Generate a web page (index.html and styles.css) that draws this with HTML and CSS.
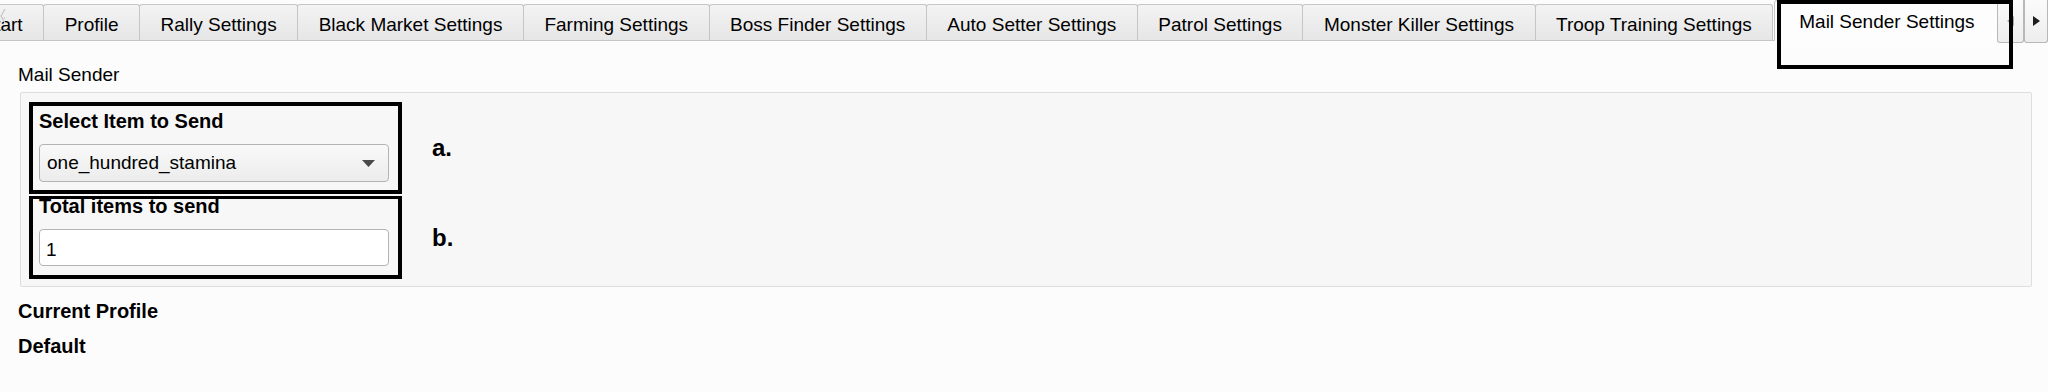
FILE: index.html
```html
<!DOCTYPE html>
<html lang="en">
<head>
    <meta charset="UTF-8">
    <meta name="viewport" content="width=device-width, initial-scale=1.0">
    <title>Mail Sender Settings</title>
    <link rel="stylesheet" href="styles.css">
</head>
<body>
    <div class="window">
        <!-- Tab bar -->
        <div class="tabbar">
            <div class="tabs">
                <div class="tab">Start</div>
                <div class="tab">Profile</div>
                <div class="tab">Rally Settings</div>
                <div class="tab">Black Market Settings</div>
                <div class="tab">Farming Settings</div>
                <div class="tab">Boss Finder Settings</div>
                <div class="tab">Auto Setter Settings</div>
                <div class="tab">Patrol Settings</div>
                <div class="tab">Monster Killer Settings</div>
                <div class="tab">Troop Training Settings</div>
                <div class="tab active">Mail Sender Settings</div>
            </div>
        </div>

        <!-- leftover of the hidden left scroll arrow -->
        <svg class="ghost-arrow" width="6" height="24" viewBox="0 0 6 24">
            <path d="M5 1 L1 8 L5 15" fill="none" stroke="#b8b8b8" stroke-width="1"/>
            <path d="M5 9 L3 12 L5 15" fill="none" stroke="#d0d0d0" stroke-width="1"/>
        </svg>

        <!-- Tab scroll buttons -->
        <div class="tab-scroll">
            <div class="scroll-btn left">
                <svg width="7" height="10" viewBox="0 0 7 10"><path d="M7 0 V10 L0 5 Z" fill="#a8a8a8"/></svg>
            </div>
            <div class="scroll-btn right">
                <svg width="7" height="10" viewBox="0 0 7 10"><path d="M0 0 V10 L7 5 Z" fill="#1e1e1e"/></svg>
            </div>
        </div>

        <!-- Annotation around the current tab -->
        <div class="annot-tab"></div>

        <div class="pane">
            <div class="pane-title">Mail Sender</div>

            <div class="group">
                <div class="field-row">
                    <div class="field">
                        <div class="field-label">Select Item to Send</div>
                        <div class="combo">
                            <span>one_hundred_stamina</span>
                            <svg width="13" height="7" viewBox="0 0 13 7"><path d="M0 0 H13 L6.5 7 Z" fill="#4a4a4a"/></svg>
                        </div>
                    </div>
                    <div class="field-mark">a.</div>
                </div>
                <div class="field-row">
                    <div class="field field-b">
                        <div class="field-label">Total items to send</div>
                        <input type="text" class="count-input" value="1">
                    </div>
                    <div class="field-mark">b.</div>
                </div>
            </div>

            <div class="profile">
                <div>Current Profile</div>
                <div>Default</div>
            </div>
        </div>
    </div>
</body>
</html>
```

FILE: styles.css
```css
body {
    margin: 0;
    background-color: #fcfcfc;
    font-family: "Liberation Sans", Arial, sans-serif;
    font-size: 19px;
    color: #000;
}
.window {
    position: relative;
    width: 2048px;
    height: 392px;
    overflow: hidden;
}
.tabbar {
    height: 41px;
    overflow: hidden;
    background: linear-gradient(to top, #c6c6c6 1px, transparent 1px);
}
.tabs {
    display: flex;
    align-items: flex-end;
    height: 41px;
    margin-left: -39px;
}
.tab {
    flex: none;
    box-sizing: border-box;
    height: 36px;
    margin-bottom: 1px;
    margin-right: -1px;
    padding: 9px 20.5px 0;
    line-height: 22px;
    border: 1px solid #c6c6c6;
    border-bottom: none;
    border-radius: 3px 3px 0 0;
    background: linear-gradient(#f3f3f3, #e6e6e6);
    white-space: nowrap;
}
.tab.active {
    position: relative;
    z-index: 1;
    height: 41px;
    margin-bottom: 0;
    margin-left: 2px;
    padding: 10px 24px 0;
    background: #fdfdfd;
}
.ghost-arrow {
    position: absolute;
    left: 0;
    top: 8px;
}
.tab-scroll {
    position: absolute;
    top: 0;
    right: 0;
    display: flex;
    z-index: 2;
}
.scroll-btn {
    box-sizing: border-box;
    height: 43px;
    border: 1px solid #b8b8b8;
    border-top: none;
    border-radius: 0 0 3px 3px;
    background: linear-gradient(#fbfbfb, #ededed);
    display: flex;
    align-items: center;
    justify-content: center;
}
.scroll-btn.left {
    width: 27px;
}
.scroll-btn.right {
    width: 24px;
}
.annot-tab {
    position: absolute;
    left: 1777px;
    top: 0;
    width: 236px;
    height: 69px;
    box-sizing: border-box;
    border: 4px solid #000;
    z-index: 3;
}
.pane {
    padding: 23px 16px 0 18px;
}
.pane-title {
    line-height: 22px;
}
.group {
    margin: 6px 0 0 2px;
    padding: 9px 8px 7px;
    background-color: #f7f7f7;
    border: 1px solid #dedede;
    border-radius: 2px;
}
.field-row {
    display: flex;
    align-items: center;
    gap: 30px;
}
.field-row + .field-row {
    margin-top: 2px;
}
.field {
    box-sizing: border-box;
    width: 373px;
    border: 4px solid #000;
    padding: 4px 9px 8px 6px;
}
.field-b {
    border-top-width: 3px;
    padding: 0 9px 9px 6px;
}
.field-label {
    font-weight: bold;
    font-size: 20px;
    line-height: 22px;
}
.field-b .field-label {
    line-height: 14px;
}
.combo {
    margin-top: 12px;
    height: 38px;
    box-sizing: border-box;
    border: 1px solid #b4b4b4;
    border-radius: 4px;
    background: linear-gradient(#f9f9f9, #ececec);
    display: flex;
    align-items: center;
    justify-content: space-between;
    padding: 0 13px 0 7px;
}
.combo svg {
    margin-top: 1px;
}
.count-input {
    display: block;
    margin-top: 16px;
    width: 100%;
    height: 37px;
    box-sizing: border-box;
    border: 1px solid #b4b4b4;
    border-radius: 4px;
    background-color: #fff;
    padding: 4px 6px 0;
    font-family: inherit;
    font-size: 19px;
    color: #000;
    outline: none;
}
.field-mark {
    font-weight: bold;
    font-size: 24px;
    line-height: 28px;
}
.profile {
    margin-top: 6.5px;
    font-weight: bold;
    font-size: 20px;
    line-height: 35px;
}
```
